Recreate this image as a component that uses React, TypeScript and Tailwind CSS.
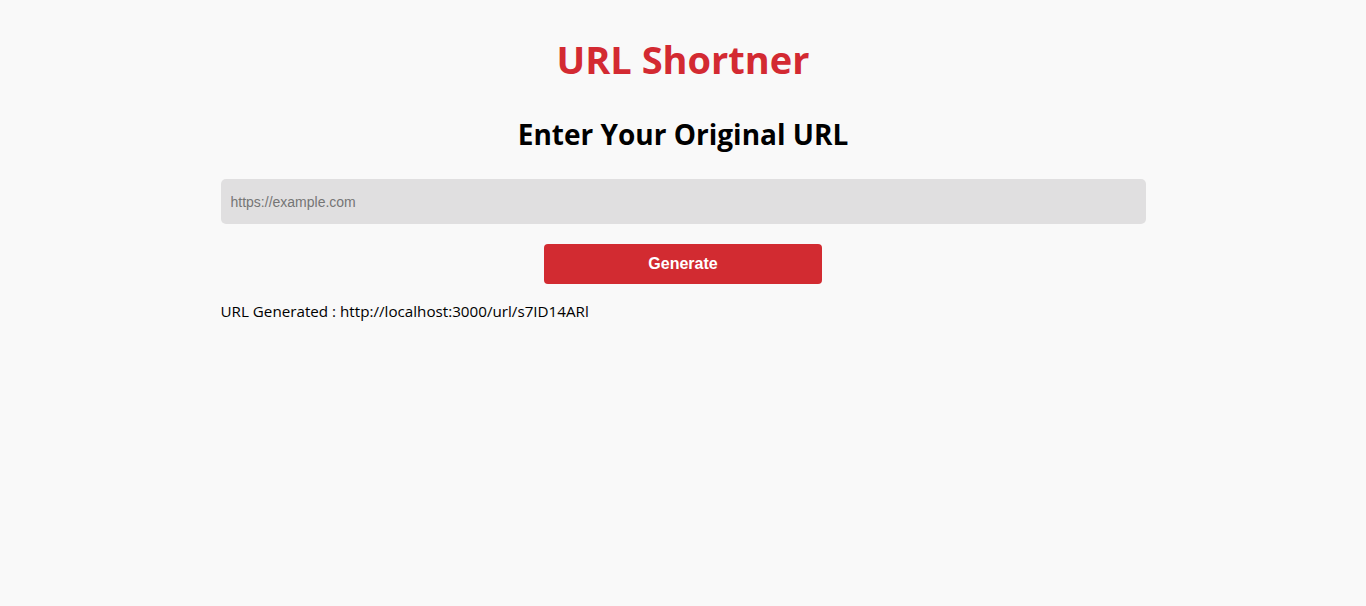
import { useState } from "react";

const App = () => {
    const [url, setUrl] = useState("");
    const [shortUrl] = useState("http://localhost:3000/url/s7ID14ARl");

    return (
        <div className="min-h-[606px] bg-[#f9f9f9] font-['Open_Sans',sans-serif] text-black">
            <div className="mx-auto w-[925px] pt-[32px]">
                <h1 className="text-center text-[38px] leading-[54px] font-bold text-[#d32a32]">
                    URL Shortner
                </h1>
                <h2 className="mt-[28px] text-center text-[28px] leading-[40px] font-bold">
                    Enter Your Original URL
                </h2>
                <input
                    type="text"
                    value={url}
                    onChange={(e) => setUrl(e.target.value)}
                    placeholder="https://example.com"
                    className="mt-[25px] block h-[45px] w-full rounded-[5px] bg-[#e0dfe0] px-[10px] font-['Liberation_Sans',sans-serif] text-[14px] placeholder:text-[#757575] focus:outline-none"
                />
                <div className="mt-[20px] flex justify-center">
                    <button className="h-[40px] w-[278px] rounded-[4px] bg-[#d22b31] font-['Liberation_Sans',sans-serif] text-[16px] font-bold text-white">
                        Generate
                    </button>
                </div>
                <p className="mt-[17px] text-[15.2px] leading-[20px]">
                    URL Generated : {shortUrl}
                </p>
            </div>
        </div>
    );
};

export default App;
